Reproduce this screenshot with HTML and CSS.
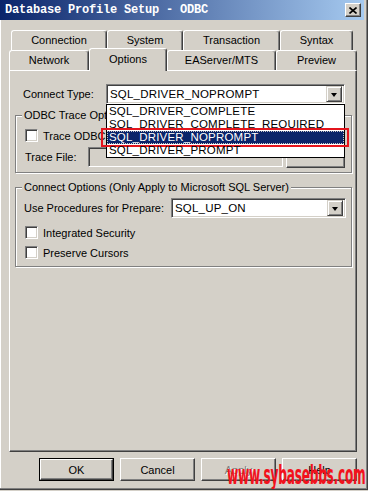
FILE: index.html
```html
<!DOCTYPE html>
<html lang="en">
<head>
  <meta charset="UTF-8" />
  <title>Database Profile Setup - ODBC</title>
  <link rel="stylesheet" href="styles.css">
</head>
<body>
  <div class="window">
    <div class="titlebar">
      <span class="title">Database Profile Setup - ODBC</span>
      <span class="close">
        <svg width="8" height="7" viewBox="0 0 8 7"><path d="M0.5 0.5 L7.5 6.5 M7.5 0.5 L0.5 6.5" stroke="#000" stroke-width="1.6"/></svg>
      </span>
    </div>

    <div class="client">
      <div class="tab-row back">
        <div class="tab" style="width:96px">Connection</div>
        <div class="tab" style="width:76px">System</div>
        <div class="tab" style="width:97px">Transaction</div>
        <div class="tab" style="width:73px">Syntax</div>
      </div>
      <div class="tab-row front">
        <div class="tab" style="width:80px">Network</div>
        <div class="tab active" style="width:78px">Options</div>
        <div class="tab" style="width:109px">EAServer/MTS</div>
        <div class="tab" style="width:81px">Preview</div>
      </div>

      <div class="panel">
        <div class="type-row">
          <span class="type-label">Connect Type:</span>
          <div class="combo combo-type">
            <span class="combo-text">SQL_DRIVER_NOPROMPT</span>
            <span class="arrow"></span>
            <ul class="droplist">
              <li>SQL_DRIVER_COMPLETE</li>
              <li>SQL_DRIVER_COMPLETE_REQUIRED</li>
              <li class="selected">SQL_DRIVER_NOPROMPT</li>
              <li>SQL_DRIVER_PROMPT</li>
            </ul>
          </div>
        </div>

        <div class="group group-trace">
          <span class="group-title">ODBC Trace Options</span>
          <label class="check-row"><span class="checkbox"></span>Trace ODBC API Calls</label>
          <div class="file-row">
            <span class="file-label">Trace File:</span>
            <span class="textbox"></span>
            <span class="btn browse"></span>
          </div>
        </div>

        <div class="group group-connect">
          <span class="group-title">Connect Options (Only Apply to Microsoft SQL Server)</span>
          <div class="proc-row">
            <span class="proc-label">Use Procedures for Prepare:</span>
            <div class="combo combo-proc">
              <span class="combo-text">SQL_UP_ON</span>
              <span class="arrow"></span>
            </div>
          </div>
          <label class="check-row first"><span class="checkbox"></span>Integrated Security</label>
          <label class="check-row second"><span class="checkbox"></span>Preserve Cursors</label>
        </div>
      </div>

      <div class="buttons">
        <span class="btn default"><span class="btn-face">OK</span></span>
        <span class="btn">Cancel</span>
        <span class="btn disabled">Apply</span>
        <span class="btn">Help</span>
      </div>
    </div>

    <div class="watermark">www.sybasebbs.com</div>
  </div>
</body>
</html>
```

FILE: styles.css
```css
body {
  margin: 0;
  background: #d4d0c8;
  font-family: 'Liberation Sans', Arial, sans-serif;
  font-size: 11px;
  color: #000;
}

.window {
  position: relative;
  width: 368px;
  height: 490px;
  box-sizing: border-box;
  background: #d4d0c8;
  border-right: 1px solid #404040;
  border-bottom: 1px solid #404040;
  box-shadow: inset -1px -1px #808080, inset 1px 0 #fff;
  overflow: hidden;
}

.titlebar {
  height: 20px;
  margin-right: 3px;
  padding: 0 3px 0 5px;
  display: flex;
  align-items: center;
  justify-content: space-between;
  background: linear-gradient(to right, #0a246a, #a6caf0);
}

.title {
  font-family: 'Liberation Mono', monospace;
  font-weight: bold;
  font-size: 12px;
  letter-spacing: -0.2px;
  color: #fff;
}

.close {
  width: 16px;
  height: 14px;
  box-sizing: border-box;
  display: flex;
  align-items: center;
  justify-content: center;
  background: #d4d0c8;
  border: 1px solid;
  border-color: #fff #404040 #404040 #fff;
  box-shadow: inset -1px -1px #808080;
}

.client {
  padding: 10px 10px 0 9px;
}

/* tabs */
.tab-row {
  display: flex;
  height: 20px;
}

.tab-row.back {
  margin-left: 2px;
}

.tab {
  box-sizing: border-box;
  height: 20px;
  line-height: 19px;
  text-align: center;
  border: 1px solid;
  border-color: #fff #404040 transparent #fff;
  border-bottom: none;
  border-radius: 3px 3px 0 0;
  box-shadow: inset -1px 0 #808080;
  background: #d4d0c8;
}

.tab.active {
  position: relative;
  z-index: 1;
  height: 23px;
  margin-top: -2px;
  line-height: 21px;
}

.panel {
  box-sizing: border-box;
  height: 382px;
  padding: 13px 0 0 5px;
  border: 1px solid;
  border-color: #fff #404040 #404040 #fff;
  box-shadow: inset -1px -1px #808080;
}

/* combo boxes */
.type-row,
.proc-row {
  display: flex;
  align-items: center;
  height: 20px;
}

.type-label {
  width: 83px;
  padding-left: 8px;
}

.proc-label {
  width: 147px;
}

.combo {
  position: relative;
  box-sizing: border-box;
  height: 20px;
  display: flex;
  align-items: center;
  justify-content: space-between;
  background: #fff;
  border: 1px solid;
  border-color: #808080 #fff #fff #808080;
  box-shadow: inset 1px 1px #404040, inset -1px -1px #d4d0c8;
  padding: 0 2px 0 3px;
}

.combo-type {
  width: 239px;
}

.combo-proc {
  width: 175px;
}

.combo-text {
  font-size: 11.5px;
  letter-spacing: 0.2px;
}

.arrow {
  position: relative;
  width: 16px;
  height: 16px;
  box-sizing: border-box;
  background: #d4d0c8;
  border: 1px solid;
  border-color: #d4d0c8 #404040 #404040 #d4d0c8;
  box-shadow: inset 1px 1px #fff, inset -1px -1px #808080;
}

.arrow::after {
  content: "";
  position: absolute;
  left: 4px;
  top: 6px;
  border-left: 3.5px solid transparent;
  border-right: 3.5px solid transparent;
  border-top: 4px solid #000;
}

.droplist {
  position: absolute;
  z-index: 5;
  left: -1px;
  top: 19px;
  width: 239px;
  box-sizing: border-box;
  margin: 0;
  padding: 0;
  list-style: none;
  background: #fff;
  border: 1px solid #000;
}

.droplist li {
  position: relative;
  height: 13px;
  line-height: 13px;
  padding-left: 2px;
  font-size: 11.5px;
  letter-spacing: 0.2px;
  white-space: nowrap;
}

.droplist li.selected {
  background: #0a246a;
  color: #fff;
  outline: 1px dotted #c8c8c8;
  outline-offset: -1px;
}

.droplist li.selected::after {
  content: "";
  position: absolute;
  left: -6px;
  right: -5px;
  top: -3px;
  bottom: -3px;
  border: 2px solid #e3141c;
}

/* group boxes */
.group {
  position: relative;
  width: 337px;
  box-sizing: border-box;
  border: 1px solid #808080;
  box-shadow: 1px 1px 0 #fff, inset 1px 1px 0 #fff;
}

.group-title {
  position: absolute;
  top: -7px;
  left: 6px;
  padding: 0 2px;
  line-height: 13px;
  background: #d4d0c8;
}

.group-trace {
  margin-top: 11px;
  padding: 13px 0 5px 9px;
}

.group-connect {
  margin-top: 14px;
  padding: 10px 0 7px 8px;
}

.check-row {
  display: flex;
  align-items: center;
  gap: 5px;
  height: 13px;
}

.group-connect .check-row {
  margin-left: 1px;
}

.check-row.first {
  margin-top: 8px;
}

.check-row.second {
  margin-top: 7px;
}

.checkbox {
  width: 13px;
  height: 13px;
  box-sizing: border-box;
  background: #fff;
  border: 1px solid;
  border-color: #808080 #fff #fff #808080;
  box-shadow: inset 1px 1px #404040, inset -1px -1px #d4d0c8;
}

.file-row {
  display: flex;
  align-items: center;
  margin-top: 5px;
  height: 20px;
}

.file-label {
  width: 63px;
}

.textbox {
  width: 195px;
  height: 20px;
  box-sizing: border-box;
  background: #d4d0c8;
  border: 1px solid;
  border-color: #808080 #fff #fff #808080;
  box-shadow: inset 1px 1px #404040, inset -1px -1px #d4d0c8;
}

.btn.browse {
  width: 59px;
  height: 21px;
  margin-left: 3px;
}

/* dialog buttons */
.buttons {
  display: flex;
  justify-content: flex-end;
  gap: 6px;
  margin-top: 6px;
}

.btn {
  width: 75px;
  height: 23px;
  box-sizing: border-box;
  display: flex;
  align-items: center;
  justify-content: center;
  border: 1px solid;
  border-color: #fff #404040 #404040 #fff;
  box-shadow: inset -1px -1px #808080;
  background: #d4d0c8;
}

.btn.default {
  border: 1px solid #000;
  box-shadow: none;
}

.btn-face {
  width: 100%;
  height: 100%;
  box-sizing: border-box;
  display: flex;
  align-items: center;
  justify-content: center;
  border: 1px solid;
  border-color: #fff #404040 #404040 #fff;
  box-shadow: inset -1px -1px #808080;
}

.btn.disabled {
  color: #808080;
  text-shadow: 1px 1px #fff;
}

.watermark {
  position: absolute;
  left: 227px;
  top: 462px;
  font-family: 'DejaVu Sans Condensed', 'Liberation Sans', sans-serif;
  font-weight: bold;
  font-size: 18px;
  line-height: 18px;
  white-space: nowrap;
  color: #f2121c;
  transform: scale(0.75, 1.45);
  transform-origin: left top;
  letter-spacing: -0.3px;
}
```
